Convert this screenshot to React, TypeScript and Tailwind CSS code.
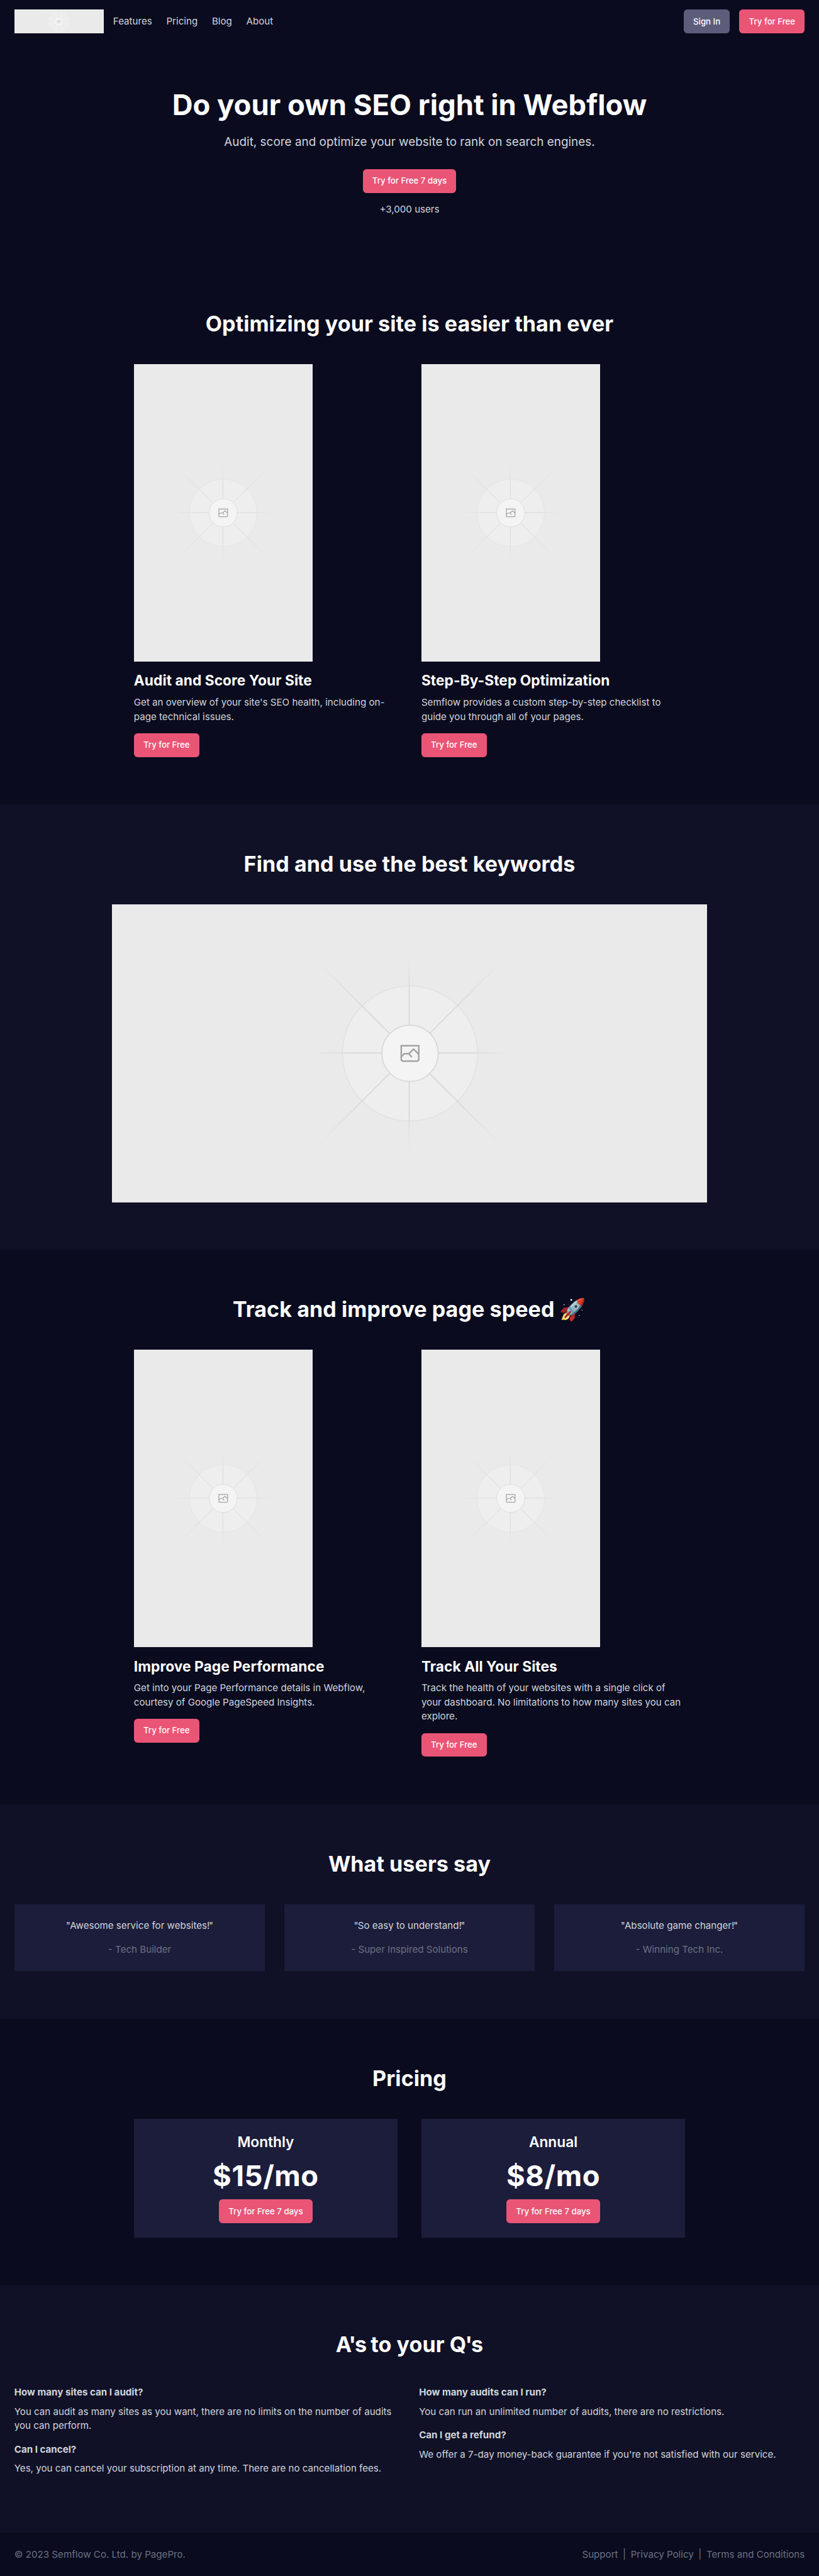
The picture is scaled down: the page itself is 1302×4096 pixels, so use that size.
import React, { useId } from "react";

type PlaceholderProps = { className: string; art: string };

/** Neutral image placeholder with a radial ornament in its centre. */
function Placeholder({ className, art }: PlaceholderProps) {
  const id = useId();
  return (
    <div className={`flex shrink-0 items-center justify-center overflow-hidden bg-[#eaeaea] ${className}`}>
      <svg viewBox="-240 -240 480 480" className={`shrink-0 ${art}`} fill="none" aria-hidden="true">
        <defs>
          <radialGradient id={id} gradientUnits="userSpaceOnUse" cx="0" cy="0" r="220">
            <stop offset="0" stopColor="#d9d9d9" />
            <stop offset="0.45" stopColor="#d9d9d9" />
            <stop offset="0.73" stopColor="#d9d9d9" stopOpacity="0.55" />
            <stop offset="1" stopColor="#d9d9d9" stopOpacity="0" />
          </radialGradient>
          <radialGradient id={`${id}s`} gradientUnits="userSpaceOnUse" cx="0" cy="0" r="165">
            <stop offset="0" stopColor="#d9d9d9" />
            <stop offset="0.6" stopColor="#d9d9d9" />
            <stop offset="1" stopColor="#d9d9d9" stopOpacity="0" />
          </radialGradient>
        </defs>
        <circle cx="0.7" cy="0" r="113.5" fill="#eeeeee" stroke="#e3e3e3" strokeWidth="2" />
        <path d="M-165 -1H165M-0.7 -165V165" stroke={`url(#${id}s)`} strokeWidth="2" />
        <path d="M-157 -157L157 157M157 -157L-157 157" stroke={`url(#${id})`} strokeWidth="2" />
        <circle cx="0.7" cy="-0.3" r="47.3" fill="#f4f4f4" stroke="#d9d9d9" strokeWidth="1.8" />
        <g stroke="#a3a3a3" strokeWidth="2.6">
          <path d="M-14 -13H15.4V9.7Q15.4 12.7 12.4 12.7H-11Q-14 12.7 -14 9.7Z" />
          <path d="M-13.7 5.3L-9 0.4H-1.3L3.7 6M-1.3 0.4L6.7 -7.3L15.3 1" />
        </g>
      </svg>
    </div>
  );
}

function Button({ children, tone = "bg-[#ea5576]" }: { children: React.ReactNode; tone?: string }) {
  return (
    <button className={`h-10 rounded-md px-4 text-sm font-medium whitespace-nowrap text-white ${tone}`}>
      {children}
    </button>
  );
}

function Section({ title, alt = false, children }: { title: React.ReactNode; alt?: boolean; children: React.ReactNode }) {
  return (
    <section className={`px-6 py-20 ${alt ? "bg-[#101127]" : ""}`}>
      <h2 className="mb-12 text-center text-4xl leading-10 font-bold tracking-[0.07px] text-white">{title}</h2>
      {children}
    </section>
  );
}

function Features({ items }: { items: { title: string; text: string }[] }) {
  return (
    <div className="mx-auto grid w-[926px] grid-cols-2 items-start gap-10">
      {items.map((item) => (
        <div key={item.title}>
          <Placeholder className="h-[500px] w-[300px]" art="size-[240px]" />
          <h3 className="mt-4 text-2xl leading-8 font-bold tracking-[0.07px] text-white">{item.title}</h3>
          <p className="mt-2 mb-[15.4px] pt-[0.6px]">{item.text}</p>
          <Button>Try for Free</Button>
        </div>
      ))}
    </div>
  );
}

const optimize = [
  { title: "Audit and Score Your Site", text: "Get an overview of your site's SEO health, including on-page technical issues." },
  { title: "Step-By-Step Optimization", text: "Semflow provides a custom step-by-step checklist to guide you through all of your pages." },
];

const speed = [
  { title: "Improve Page Performance", text: "Get into your Page Performance details in Webflow, courtesy of Google PageSpeed Insights." },
  { title: "Track All Your Sites", text: "Track the health of your websites with a single click of your dashboard. No limitations to how many sites you can explore." },
];

const quotes = [
  { text: "Awesome service for websites!", by: "- Tech Builder" },
  { text: "So easy to understand!", by: "- Super Inspired Solutions" },
  { text: "Absolute game changer!", by: "- Winning Tech Inc." },
];

const plans = [
  { name: "Monthly", price: "$15/mo" },
  { name: "Annual", price: "$8/mo" },
];

const faq = [
  [
    { q: "How many sites can I audit?", a: "You can audit as many sites as you want, there are no limits on the number of audits you can perform." },
    { q: "Can I cancel?", a: "Yes, you can cancel your subscription at any time. There are no cancellation fees." },
  ],
  [
    { q: "How many audits can I run?", a: "You can run an unlimited number of audits, there are no restrictions." },
    { q: "Can I get a refund?", a: "We offer a 7-day money-back guarantee if you're not satisfied with our service." },
  ],
];

export default function App() {
  return (
    <div className="min-h-[4329px] bg-[#0a0b1e] font-['Inter','Noto_Color_Emoji',sans-serif] text-base text-gray-300 [zoom:0.9464]">
      <header className="flex items-center justify-between px-6 py-4">
        <div className="flex items-center gap-4">
          <Placeholder className="h-10 w-[150px]" art="size-[77px]" />
          <nav className="flex gap-6 pt-px">
            <a>Features</a>
            <a>Pricing</a>
            <a>Blog</a>
            <a>About</a>
          </nav>
        </div>
        <div className="flex gap-4">
          <Button tone="bg-[#5d5d7b]">Sign In</Button>
          <Button>Try for Free</Button>
        </div>
      </header>

      <section className="flex flex-col items-center py-20 text-center">
        <h1 className="text-5xl leading-[48px] font-bold text-white">Do your own SEO right in Webflow</h1>
        <p className="mt-6 mb-[31.4px] pt-[0.6px] text-xl leading-7">
          Audit, score and optimize your website to rank on search engines.
        </p>
        <Button>Try for Free 7 days</Button>
        <p className="mt-4 -mb-[0.6px] pt-[0.6px]">+3,000 users</p>
      </section>

      <Section title="Optimizing your site is easier than ever">
        <Features items={optimize} />
      </Section>

      <Section title="Find and use the best keywords" alt>
        <Placeholder className="mx-auto h-[500px] w-[1000px]" art="size-[480px]" />
      </Section>

      <Section title="Track and improve page speed 🚀">
        <Features items={speed} />
      </Section>

      <Section title="What users say" alt>
        <div className="grid grid-cols-3 gap-8">
          {quotes.map((quote) => (
            <div key={quote.by} className="bg-[#1c1d3b] p-6 text-center">
              <p className="-mb-[0.6px] pt-[0.6px]">
                <span className="-mr-px">"</span>
                {quote.text}
                <span className="-ml-[1.5px]">"</span>
              </p>
              <p className="mt-4 -mb-[0.6px] pt-[0.6px] text-gray-500">{quote.by}</p>
            </div>
          ))}
        </div>
      </Section>

      <Section title="Pricing">
        <div className="mx-auto grid w-[926px] grid-cols-2 gap-10">
          {plans.map((plan) => (
            <div key={plan.name} className="flex flex-col items-center bg-[#1c1d3b] p-6">
              <h3 className="text-2xl leading-8 font-semibold text-white">{plan.name}</h3>
              <p className="my-4 text-5xl leading-[48px] font-bold tracking-[0.6px] text-white">{plan.price}</p>
              <Button>Try for Free 7 days</Button>
            </div>
          ))}
        </div>
      </Section>

      <Section
        title={
          <>
            <span className="tracking-[-2px]">A's</span> to your <span className="tracking-[-2px]">Q'</span>s
          </>
        }
        alt
      >
        <div className="grid grid-cols-2 gap-8">
          {faq.map((column) => (
            <dl key={column[0].q}>
              {column.map((item) => (
                <div key={item.q} className="mb-4">
                  <dt className="mb-2 font-bold">{item.q}</dt>
                  <dd className="-mb-[0.6px] pt-[0.6px]">{item.a}</dd>
                </div>
              ))}
            </dl>
          ))}
        </div>
      </Section>

      <footer className="flex justify-between p-6 text-gray-500">
        <p className="-mb-[0.6px] pt-[0.6px]">© 2023 Semflow Co. Ltd. by PagePro.</p>
        <div className="-mb-[0.6px] flex pt-[0.6px]">
          <a>Support</a>
          <span className="mx-2">|</span>
          <a>Privacy Policy</a>
          <span className="mx-2">|</span>
          <a>Terms and Conditions</a>
        </div>
      </footer>
    </div>
  );
}
